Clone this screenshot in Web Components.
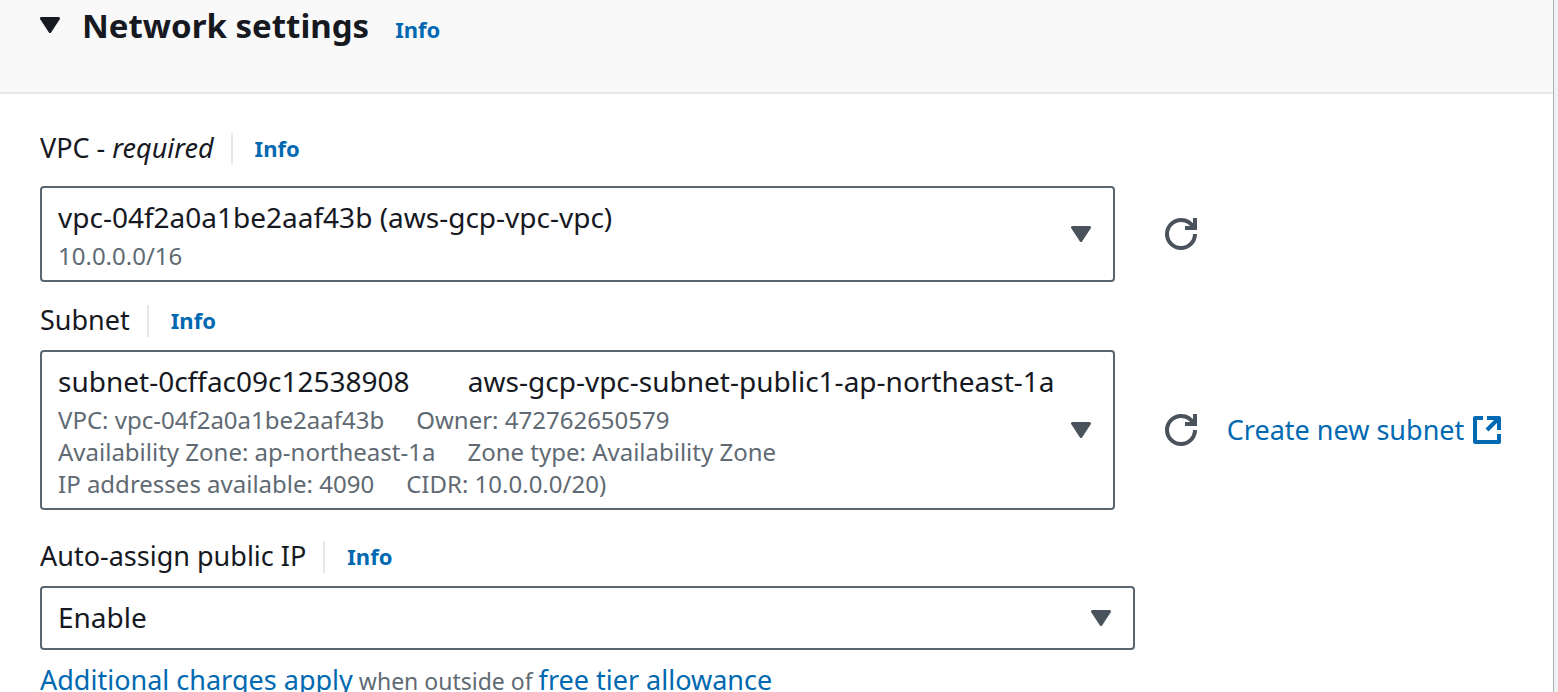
<!DOCTYPE html>
<html lang="en">
<head>
<meta charset="utf-8">
<meta name="viewport" content="width=device-width, initial-scale=1">
<title>Network settings</title>
<style>
  html { scrollbar-width: none; }
  body {
    margin: 0;
    background: #eff2f2;
    color: #16191f;
    font-family: "Noto Sans", "Open Sans", sans-serif;
    font-size: 27px;
    line-height: 32px;
    --link: #0069b1;
    --muted: #5f6a73;
    --line: #e3e9e8;
    --control: #5a6670;
    --icon: #4a525b;
  }
</style>
</head>
<body>
<settings-panel>
  <span slot="title">Network settings</span>
  <info-link slot="info"></info-link>

  <field-row class="first">
    <form-field label="VPC" note="required"
      value="vpc-04f2a0a1be2aaf43b (aws-gcp-vpc-vpc)">
      <detail-line>10.0.0.0/16</detail-line>
    </form-field>
    <refresh-button slot="side" label="Refresh VPCs"></refresh-button>
  </field-row>

  <field-row>
    <form-field label="Subnet"
      value="subnet-0cffac09c12538908&nbsp;&nbsp;&nbsp;&nbsp;&nbsp;&nbsp;&nbsp;&nbsp;aws-gcp-vpc-subnet-public1-ap-northeast-1a">
      <detail-line><span>VPC: vpc-04f2a0a1be2aaf43b</span><span>Owner: 472762650579</span></detail-line>
      <detail-line><span>Availability Zone: ap-northeast-1a</span><span>Zone type: Availability Zone</span></detail-line>
      <detail-line><span>IP addresses available: 4090</span><span>CIDR: 10.0.0.0/20)</span></detail-line>
    </form-field>
    <refresh-button slot="side" label="Refresh subnets"></refresh-button>
    <external-link slot="side">Create new subnet</external-link>
  </field-row>

  <field-row class="wide">
    <form-field label="Auto-assign public IP" value="Enable"></form-field>
  </field-row>
  <charge-note></charge-note>
</settings-panel>

<script>
  const caret = `<svg class="caret" viewBox="0 0 20 16" width="20" height="16" aria-hidden="true"><path d="M1.500 1.500h17L10 14.500z" fill="currentColor" stroke="currentColor" stroke-width="3" stroke-linejoin="round"/></svg>`;

  class Base extends HTMLElement {
    connectedCallback() {
      if (this.shadowRoot) return;
      this.attachShadow({ mode: 'open' }).innerHTML = this.render();
    }
  }

  customElements.define('settings-panel', class extends Base {
    render() {
      return `<style>
        :host { display: block; box-sizing: border-box; min-height: 100vh; margin-right: 4px; border-right: 1px solid #aab2b5; background: #fff; }
        header { display: flex; align-items: baseline; box-sizing: border-box; height: 94px; padding: 3px 40px 0; background: #f9f9f9; border-bottom: 2px solid var(--line); }
        button { padding: 0; border: 0; background: none; color: inherit; font: inherit; }
        .caret { margin-right: 22px; vertical-align: 5px; }
        h2 { margin: 0; font-size: 33px; line-height: 46px; }
        .info { margin-left: 26px; }
        main { padding: 0 40px 16px; }
      </style>
      <header><h2><button type="button" aria-expanded="true">${caret}<slot name="title"></slot></button></h2><div class="info"><slot name="info"></slot></div></header>
      <main><slot></slot></main>`;
    }
  });

  customElements.define('info-link', class extends Base {
    render() {
      return `<style>
        :host { display: block; font-size: 22px; font-weight: 700; }
        a { color: var(--link); text-decoration: none; }
      </style><a href="#info">Info</a>`;
    }
  });

  customElements.define('field-row', class extends Base {
    render() {
      return `<style>
        :host { display: grid; grid-template-columns: 3fr 1fr; column-gap: 40px; align-items: end; margin-top: 23px; }
        :host(.first) { margin-top: 39px; --label-gap: 21px; }
        :host(.wide) { grid-template-columns: calc(75% - 10px); margin-top: 31px; }
        .side { display: flex; align-items: center; gap: 20px; align-self: stretch; padding-top: calc(32px + var(--label-gap, 13px)); }
        :host(.wide) .side { display: none; }
      </style><slot></slot><div class="side"><slot name="side"></slot></div>`;
    }
  });

  customElements.define('form-field', class extends Base {
    render() {
      const note = this.getAttribute('note');
      const lines = this.children.length;
      return `<style>
        :host { display: block; min-width: 0; }
        .label { display: flex; align-items: flex-start; height: 32px; margin-bottom: var(--label-gap, 13px); }
        label { line-height: 30px; }
        info-link { line-height: 30px; border-left: 2px solid var(--line); height: 32px; margin-left: 17px; padding-left: 22px; }
        .box { display: grid; }
        select, .details, .caret { grid-area: 1 / 1; }
        select { appearance: none; width: 100%; min-width: 0; margin: 0; padding: 11px 60px 13px 16px; border: 2px solid var(--control); border-radius: 4px; background: #fff; color: inherit; font: inherit; font-size: 28px; line-height: 36px; }
        .rich select { height: calc(64px + 32px * var(--lines)); padding-bottom: calc(13px + 32px * var(--lines)); }
        .details { align-self: start; padding: 54px 60px 0 18px; pointer-events: none; }
        .caret { place-self: center end; margin-right: 24px; color: var(--icon); pointer-events: none; }
      </style>
      <div class="label"><label for="control">${this.getAttribute('label')}${note ? ` - <i>${note}</i>` : ''}</label><info-link></info-link></div>
      <div class="box${lines ? ' rich' : ''}" style="--lines: ${lines}">
        <select id="control"${lines ? ' aria-describedby="details"' : ''}><option>${this.getAttribute('value')}</option></select>
        ${lines ? '<div class="details" id="details"><slot></slot></div>' : ''}${caret}
      </div>`;
    }
  });

  customElements.define('detail-line', class extends Base {
    render() {
      return `<style>
        :host { display: flex; gap: 32px; color: var(--muted); font-size: 24px; line-height: 32px; white-space: nowrap; }
      </style><slot></slot>`;
    }
  });

  customElements.define('refresh-button', class extends Base {
    render() {
      return `<style>
        :host { display: block; }
        button { display: block; padding: 10px; border: 0; background: none; color: var(--icon); }
        svg { display: block; }
      </style>
      <button type="button" aria-label="${this.getAttribute('label')}"><svg viewBox="0 0 16 16" width="32" height="32" fill="none" stroke="currentColor" stroke-width="2"><path d="M10 5h5V0"/><path d="M15 8a7 7 0 1 1-7-7c2.790 0 5.200 1.630 6.330 4"/></svg></button>`;
    }
  });

  customElements.define('external-link', class extends Base {
    render() {
      return `<style>
        :host { display: block; }
        a { display: flex; align-items: center; gap: 9px; color: var(--link); text-decoration: none; white-space: nowrap; }
      </style>
      <a href="#create-subnet"><slot></slot><svg viewBox="0 0 28 28" width="28" height="28" fill="none" stroke="currentColor" stroke-width="4" stroke-linejoin="round" aria-hidden="true"><path d="M10 2H2v24h24v-8M14 2h12v12M26 2 14 14"/></svg></a>`;
    }
  });

  customElements.define('charge-note', class extends Base {
    render() {
      return `<style>
        :host { display: block; margin-top: 14px; color: var(--muted); font-size: 23px; line-height: 32px; }
        a { color: var(--link); font-size: 27px; text-decoration: none; }
      </style><a href="#charges">Additional charges apply</a> when outside of <a href="#free-tier">free tier allowance</a>`;
    }
  });
</script>
</body>
</html>
